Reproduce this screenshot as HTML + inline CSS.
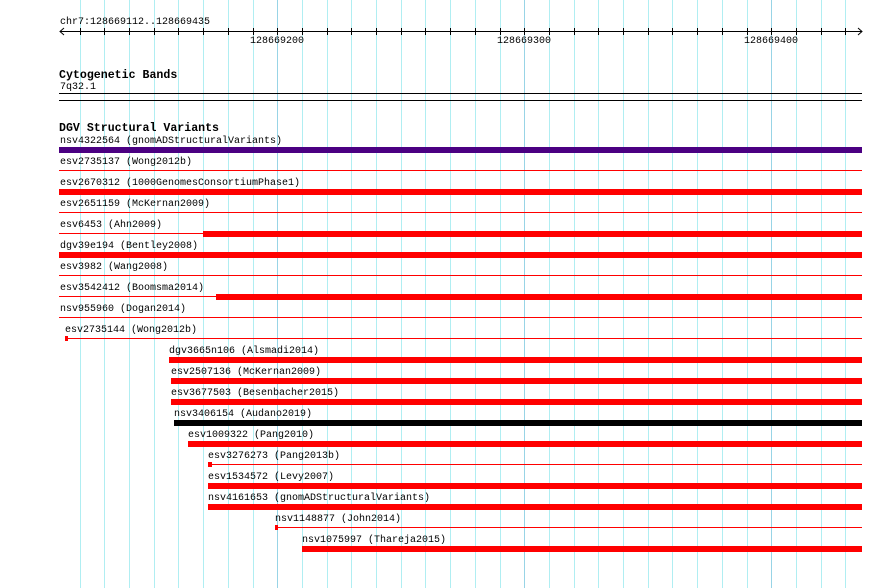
<!DOCTYPE html>
<html><head><meta charset="utf-8"><style>
html,body{margin:0;padding:0;background:#fff;}
body{width:890px;height:588px;position:relative;overflow:hidden;font-family:"Liberation Mono","DejaVu Sans Mono",monospace;font-size:10px;color:#000;}
.g{position:absolute;top:0;width:1px;height:588px;background:#b0eef2;}
.G{background:#98d4e6;}
.t{position:absolute;top:28px;width:1px;height:7px;background:#000;}
.l{position:absolute;white-space:pre;line-height:10px;font-size:10px;}
.h{position:absolute;white-space:pre;font-weight:bold;font-size:11.6px;line-height:12px;}
.k{position:absolute;height:6px;}
.n{position:absolute;height:1px;}
.r{background:#ff0000;}
</style></head><body>
<div class="g" style="left:80px"></div><div class="g" style="left:104px"></div><div class="g" style="left:129px"></div><div class="g" style="left:154px"></div><div class="g" style="left:178px"></div><div class="g" style="left:203px"></div><div class="g" style="left:228px"></div><div class="g" style="left:253px"></div><div class="g G" style="left:277px"></div><div class="g" style="left:302px"></div><div class="g" style="left:327px"></div><div class="g" style="left:351px"></div><div class="g" style="left:376px"></div><div class="g" style="left:401px"></div><div class="g" style="left:425px"></div><div class="g" style="left:450px"></div><div class="g" style="left:475px"></div><div class="g" style="left:500px"></div><div class="g G" style="left:524px"></div><div class="g" style="left:549px"></div><div class="g" style="left:574px"></div><div class="g" style="left:598px"></div><div class="g" style="left:623px"></div><div class="g" style="left:648px"></div><div class="g" style="left:672px"></div><div class="g" style="left:697px"></div><div class="g" style="left:722px"></div><div class="g" style="left:747px"></div><div class="g G" style="left:771px"></div><div class="g" style="left:796px"></div><div class="g" style="left:821px"></div><div class="g" style="left:845px"></div>

<div class="l" style="left:60px;top:18px">chr7:128669112..128669435</div>
<svg style="position:absolute;left:0;top:0" width="890" height="60">
<line x1="60" y1="31.5" x2="862" y2="31.5" stroke="#000" stroke-width="1"/>
<polyline points="64,28 60,31.5 64,35" fill="none" stroke="#000"/>
<polyline points="858,28 862,31.5 858,35" fill="none" stroke="#000"/>
</svg>
<div class="t" style="left:80px"></div><div class="t" style="left:104px"></div><div class="t" style="left:129px"></div><div class="t" style="left:154px"></div><div class="t" style="left:178px"></div><div class="t" style="left:203px"></div><div class="t" style="left:228px"></div><div class="t" style="left:253px"></div><div class="t" style="left:277px"></div><div class="t" style="left:302px"></div><div class="t" style="left:327px"></div><div class="t" style="left:351px"></div><div class="t" style="left:376px"></div><div class="t" style="left:401px"></div><div class="t" style="left:425px"></div><div class="t" style="left:450px"></div><div class="t" style="left:475px"></div><div class="t" style="left:500px"></div><div class="t" style="left:524px"></div><div class="t" style="left:549px"></div><div class="t" style="left:574px"></div><div class="t" style="left:598px"></div><div class="t" style="left:623px"></div><div class="t" style="left:648px"></div><div class="t" style="left:672px"></div><div class="t" style="left:697px"></div><div class="t" style="left:722px"></div><div class="t" style="left:747px"></div><div class="t" style="left:771px"></div><div class="t" style="left:796px"></div><div class="t" style="left:821px"></div><div class="t" style="left:845px"></div>
<div class="l" style="left:250px;top:37px">128669200</div>
<div class="l" style="left:497px;top:37px">128669300</div>
<div class="l" style="left:744px;top:37px">128669400</div>

<div class="h" style="left:59px;top:70px">Cytogenetic Bands</div>
<div class="l" style="left:60px;top:83px">7q32.1</div>
<div class="n" style="left:59px;top:93px;width:803px;background:#000"></div>
<div class="n" style="left:59px;top:100px;width:803px;background:#000"></div>

<div class="h" style="left:59px;top:123px">DGV Structural Variants</div>

<div class="l" style="left:60px;top:137px">nsv4322564 (gnomADStructuralVariants)</div>
<div class="k" style="left:59px;top:147px;width:803px;background:#4b0082"></div>

<div class="l" style="left:60px;top:158px">esv2735137 (Wong2012b)</div>
<div class="n r" style="left:59px;top:170px;width:803px"></div>

<div class="l" style="left:60px;top:179px">esv2670312 (1000GenomesConsortiumPhase1)</div>
<div class="k r" style="left:59px;top:189px;width:803px"></div>

<div class="l" style="left:60px;top:200px">esv2651159 (McKernan2009)</div>
<div class="n r" style="left:59px;top:212px;width:803px"></div>

<div class="l" style="left:60px;top:221px">esv6453 (Ahn2009)</div>
<div class="n r" style="left:59px;top:233px;width:144px"></div>
<div class="k r" style="left:203px;top:231px;width:659px"></div>

<div class="l" style="left:60px;top:242px">dgv39e194 (Bentley2008)</div>
<div class="k r" style="left:59px;top:252px;width:803px"></div>

<div class="l" style="left:60px;top:263px">esv3982 (Wang2008)</div>
<div class="n r" style="left:59px;top:275px;width:803px"></div>

<div class="l" style="left:60px;top:284px">esv3542412 (Boomsma2014)</div>
<div class="n r" style="left:59px;top:296px;width:157px"></div>
<div class="k r" style="left:216px;top:294px;width:646px"></div>

<div class="l" style="left:60px;top:305px">nsv955960 (Dogan2014)</div>
<div class="n r" style="left:59px;top:317px;width:803px"></div>

<div class="l" style="left:65px;top:326px">esv2735144 (Wong2012b)</div>
<div class="k r" style="left:65px;top:336px;width:3px;height:5px"></div>
<div class="n r" style="left:68px;top:338px;width:794px"></div>

<div class="l" style="left:169px;top:347px">dgv3665n106 (Alsmadi2014)</div>
<div class="k r" style="left:169px;top:357px;width:693px"></div>

<div class="l" style="left:171px;top:368px">esv2507136 (McKernan2009)</div>
<div class="k r" style="left:171px;top:378px;width:691px"></div>

<div class="l" style="left:171px;top:389px">esv3677503 (Besenbacher2015)</div>
<div class="k r" style="left:171px;top:399px;width:691px"></div>

<div class="l" style="left:174px;top:410px">nsv3406154 (Audano2019)</div>
<div class="k" style="left:174px;top:420px;width:688px;background:#000"></div>

<div class="l" style="left:188px;top:431px">esv1009322 (Pang2010)</div>
<div class="k r" style="left:188px;top:441px;width:674px"></div>

<div class="l" style="left:208px;top:452px">esv3276273 (Pang2013b)</div>
<div class="k r" style="left:208px;top:462px;width:4px;height:5px"></div>
<div class="n r" style="left:212px;top:464px;width:650px"></div>

<div class="l" style="left:208px;top:473px">esv1534572 (Levy2007)</div>
<div class="k r" style="left:208px;top:483px;width:654px"></div>

<div class="l" style="left:208px;top:494px">nsv4161653 (gnomADStructuralVariants)</div>
<div class="k r" style="left:208px;top:504px;width:654px"></div>

<div class="l" style="left:275px;top:515px">nsv1148877 (John2014)</div>
<div class="k r" style="left:275px;top:525px;width:3px;height:5px"></div>
<div class="n r" style="left:278px;top:527px;width:584px"></div>

<div class="l" style="left:302px;top:536px">nsv1075997 (Thareja2015)</div>
<div class="k r" style="left:302px;top:546px;width:560px"></div>
</body></html>
